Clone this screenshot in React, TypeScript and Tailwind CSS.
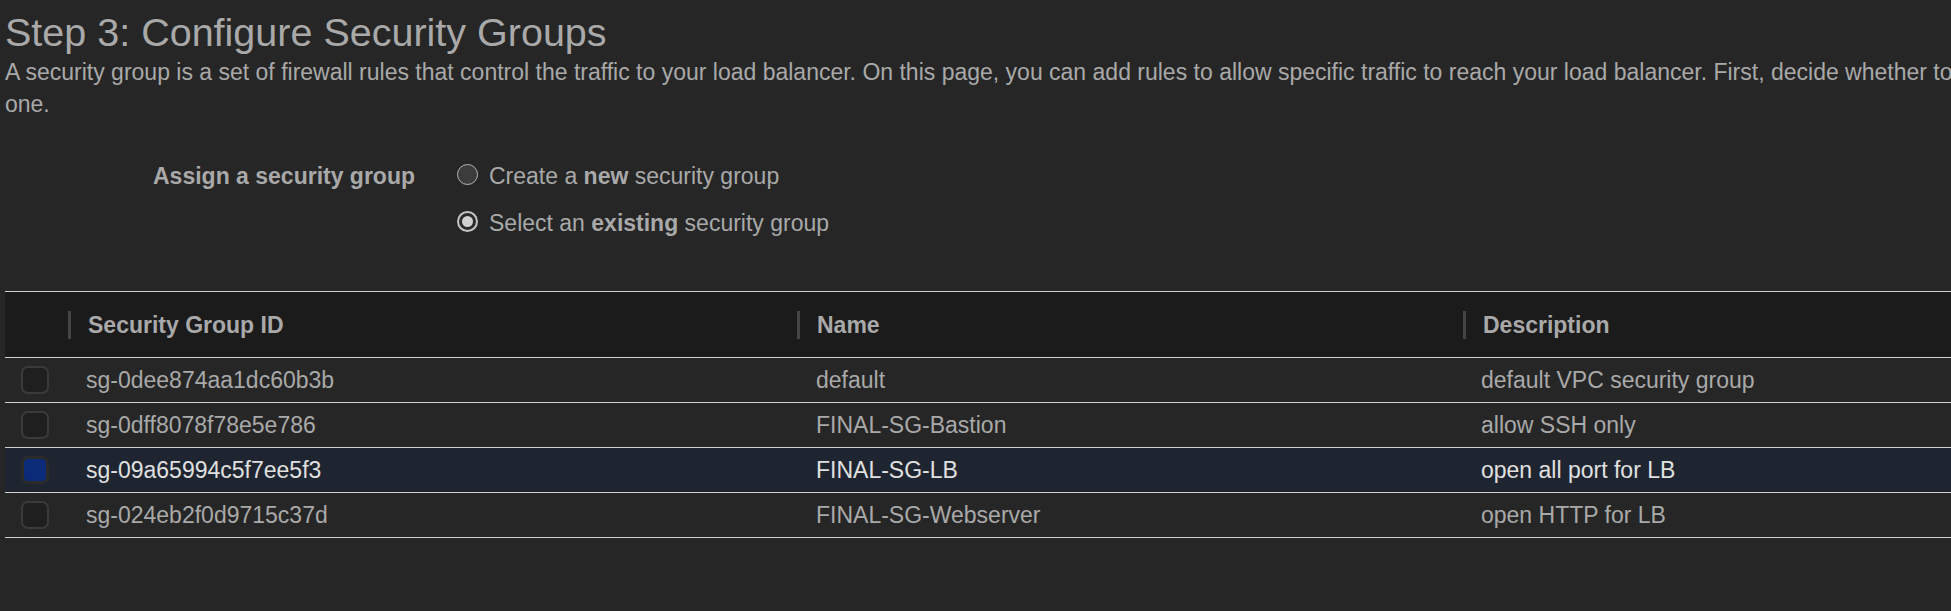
const groups = [
  { id: "sg-0dee874aa1dc60b3b", name: "default", description: "default VPC security group" },
  { id: "sg-0dff8078f78e5e786", name: "FINAL-SG-Bastion", description: "allow SSH only" },
  { id: "sg-09a65994c5f7ee5f3", name: "FINAL-SG-LB", description: "open all port for LB", selected: true },
  { id: "sg-024eb2f0d9715c37d", name: "FINAL-SG-Webserver", description: "open HTTP for LB" },
];

function Radio({ checked }: { checked?: boolean }) {
  if (checked) {
    return (
      <span className="mt-[2px] flex h-[21px] w-[21px] shrink-0 items-center justify-center rounded-full border-2 border-[#c4c4c4] bg-[#2a2a2a]">
        <span className="h-[11px] w-[11px] rounded-full bg-[#d0d0d0]" />
      </span>
    );
  }
  return <span className="mt-[2px] h-[21px] w-[21px] shrink-0 rounded-full border border-[#b5b5b5] bg-[#3c3c3c]" />;
}

function Checkbox({ checked }: { checked?: boolean }) {
  return (
    <span
      className={
        checked
          ? "h-[28px] w-[28px] rounded-[7px] border-[3px] border-[#2b2b2b] bg-[#0b2a78]"
          : "h-[28px] w-[28px] rounded-[7px] border-2 border-[#3a3a3a] bg-[#1f1f1f]"
      }
    />
  );
}

function HeaderCell({ label }: { label: string }) {
  return (
    <div className="flex items-center">
      <span className="h-[28px] w-[3px] bg-[#454545]" />
      <span className="pl-[17px] font-bold">{label}</span>
    </div>
  );
}

export default function App() {
  return (
    <div className="h-screen w-full overflow-hidden bg-[#262626] font-['Liberation_Sans',Arial,sans-serif] text-[#a9a9a9]">
      <div className="pl-[5px] pt-[10px]">
        <h1 className="text-[39.5px] leading-[45px]">Step 3: Configure Security Groups</h1>
        <p className="mt-[1px] whitespace-nowrap text-[23px] leading-[32px]">
          A security group is a set of firewall rules that control the traffic to your load balancer. On this page,
          you can add rules to allow specific traffic to reach your load balancer. First, decide whether to create a
          new security group or select an existing
          <br />
          one.
        </p>
      </div>

      <div className="mt-[42px] flex pl-[153px] text-[23px] leading-[28px]">
        <div className="w-[304px] font-bold">Assign a security group</div>
        <div className="flex flex-col gap-[19px]">
          <label className="flex items-start gap-[11px]">
            <Radio />
            <span>
              Create a <b>new</b> security group
            </span>
          </label>
          <label className="flex items-start gap-[11px]">
            <Radio checked />
            <span>
              Select an <b>existing</b> security group
            </span>
          </label>
        </div>
      </div>

      <div className="ml-[5px] mt-[54px] min-w-[2000px] text-[23px] leading-[28px]">
        <div className="grid h-[67px] grid-cols-[63px_729px_666px_1fr] border-y border-[#d2d2d2] bg-[#1b1b1b]">
          <div />
          <HeaderCell label="Security Group ID" />
          <HeaderCell label="Name" />
          <HeaderCell label="Description" />
        </div>
        {groups.map((g) => (
          <div
            key={g.id}
            className={
              g.selected
                ? "grid h-[45px] grid-cols-[63px_729px_666px_1fr] items-center border-b border-[#d2d2d2] bg-[#1e2530] text-[#e0e0e0]"
                : "grid h-[45px] grid-cols-[63px_729px_666px_1fr] items-center border-b border-[#d2d2d2]"
            }
          >
            <div className="flex pl-[16px]">
              <Checkbox checked={g.selected} />
            </div>
            <div className="pl-[18px]">{g.id}</div>
            <div className="pl-[19px]">{g.name}</div>
            <div className="pl-[18px]">{g.description}</div>
          </div>
        ))}
      </div>
    </div>
  );
}
